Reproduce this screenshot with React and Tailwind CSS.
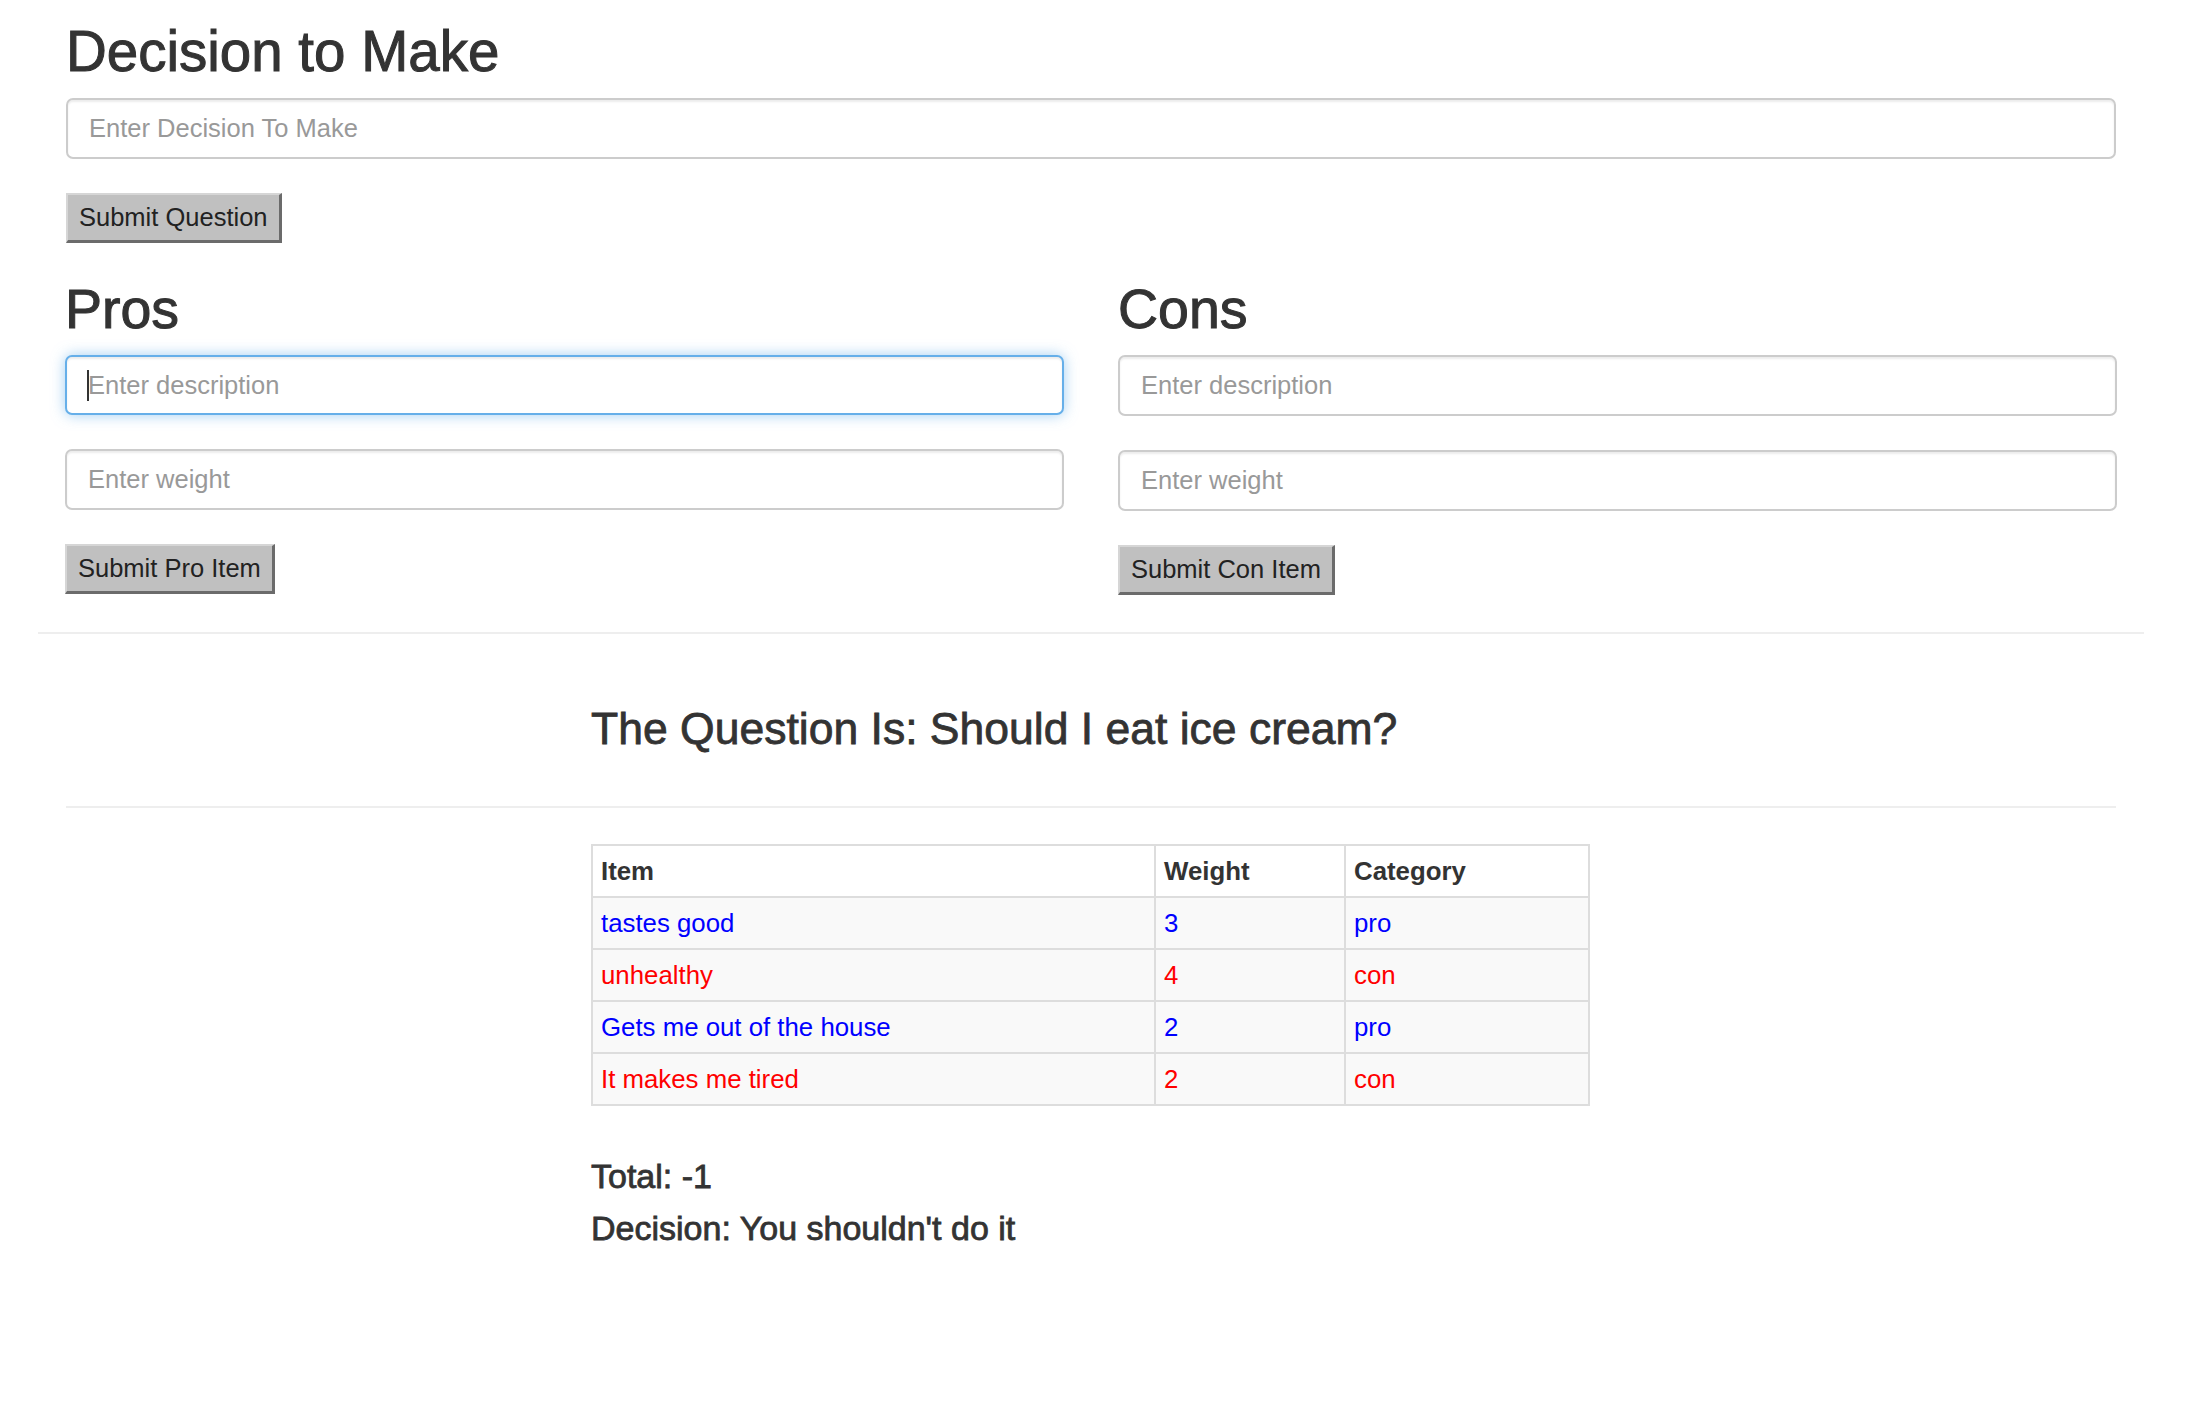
import React from 'react';

const rows = [
  { item: 'tastes good', weight: 3, category: 'pro' },
  { item: 'unhealthy', weight: 4, category: 'con' },
  { item: 'Gets me out of the house', weight: 2, category: 'pro' },
  { item: 'It makes me tired', weight: 2, category: 'con' },
];

function Field({ placeholder, focused }) {
  return (
    <div className="relative">
      <input
        type="text"
        placeholder={placeholder}
        className={
          focused
            ? 'block h-[60px] w-full rounded-[7px] border-2 border-[#66afe9] bg-white px-[21px] text-[25.5px] text-[#555] outline-none placeholder:text-[#999] shadow-[inset_0_2px_2px_rgba(0,0,0,0.075),0_0_14px_rgba(102,175,233,0.6)]'
            : 'block h-[61px] w-full rounded-[7px] border-2 border-[#ccc] bg-white px-[21px] text-[25.5px] text-[#555] outline-none placeholder:text-[#999] shadow-[inset_0_2px_2px_rgba(0,0,0,0.075)]'
        }
      />
      {focused && <div className="absolute left-[22px] top-[15px] h-[31px] w-[2px] bg-[#333]" />}
    </div>
  );
}

function Btn({ children }) {
  return (
    <button className="h-[50px] border-t-2 border-l-2 border-[#d6d6d6] border-b-[3px] border-r-[3px] border-b-[#6b6b6b] border-r-[#6b6b6b] bg-[#c0c0c0] px-[11px] text-[25.5px] leading-none text-[#222]">
      {children}
    </button>
  );
}

function Side({ title, focused, label }) {
  return (
    <div className="px-[27px]">
      <h2 className="text-[55.5px] leading-[60px] [-webkit-text-stroke:1px_#333]">{title}</h2>
      <div className="mt-[16px]">
        <Field placeholder="Enter description" focused={focused} />
      </div>
      <div className="mt-[34px]">
        <Field placeholder="Enter weight" />
      </div>
      <div className="mt-[34px]">
        <Btn>{label}</Btn>
      </div>
    </div>
  );
}

export default function App() {
  return (
    <div className="min-h-screen bg-white font-['Liberation_Sans',Arial,sans-serif] text-[#333]">
      <div className="ml-[38px] w-[2106px]">
        <div className="px-[28px] pt-[22px]">
          <h1 className="text-[56.5px] leading-[60px] [-webkit-text-stroke:1px_#333]">Decision to Make</h1>
          <div className="mt-[16px]">
            <Field placeholder="Enter Decision To Make" />
          </div>
          <div className="mt-[34px]">
            <Btn>Submit Question</Btn>
          </div>
        </div>

        <div className="mt-[36px] grid grid-cols-2">
          <Side title="Pros" focused label="Submit Pro Item" />
          <Side title="Cons" label="Submit Con Item" />
        </div>

        <hr className="mt-[37px] border-0 border-t-2 border-[#eee]" />

        <div className="ml-[526px] w-[1053px] px-[27px]">
          <h3 className="mt-[71px] text-[44.5px] leading-[48px] [-webkit-text-stroke:0.8px_#333]">
            The Question Is: Should I eat ice cream?
          </h3>
        </div>

        <div className="px-[28px]">
          <hr className="mt-[53px] border-0 border-t-2 border-[#eee]" />
        </div>

        <div className="ml-[526px] w-[1053px] px-[27px]">
          <table className="mt-[36px] w-full border-collapse border-2 border-[#ddd] text-[25.8px]">
            <thead>
              <tr className="h-[52px] bg-white">
                <th className="w-[563px] border-2 border-[#ddd] px-[8px] text-left font-bold">Item</th>
                <th className="w-[190px] border-2 border-[#ddd] px-[8px] text-left font-bold">Weight</th>
                <th className="border-2 border-[#ddd] px-[8px] text-left font-bold">Category</th>
              </tr>
            </thead>
            <tbody>
              {rows.map((r) => {
                const color = r.category === 'pro' ? 'text-[#0000ff]' : 'text-[#ff0000]';
                return (
                  <tr key={r.item} className={`h-[52px] bg-[#f9f9f9] ${color}`}>
                    <td className="border-2 border-[#ddd] px-[8px]">{r.item}</td>
                    <td className="border-2 border-[#ddd] px-[8px]">{r.weight}</td>
                    <td className="border-2 border-[#ddd] px-[8px]">{r.category}</td>
                  </tr>
                );
              })}
            </tbody>
          </table>

          <h4 className="mt-[52px] text-[34px] leading-[36px] [-webkit-text-stroke:0.8px_#333]">Total: -1</h4>
          <h4 className="mt-[16px] text-[34px] leading-[36px] [-webkit-text-stroke:0.8px_#333]">Decision: You shouldn't do it</h4>
        </div>
      </div>
    </div>
  );
}
